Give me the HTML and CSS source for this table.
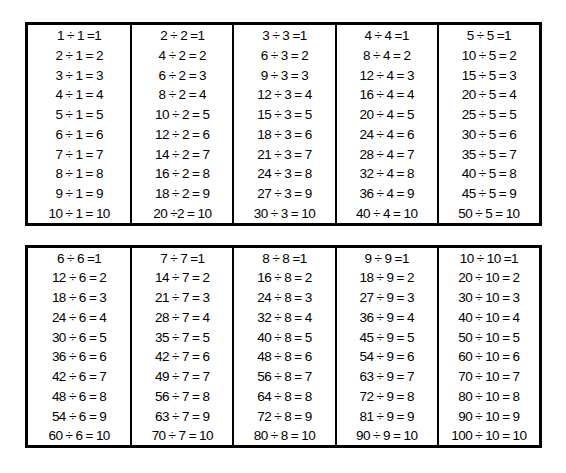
FILE: index.html
```html
<!DOCTYPE html>
<html>
<head>
<meta charset="utf-8">
<link rel="stylesheet" href="styles.css">
</head>
<body>
<div class="page">
  <div class="sheet">
    <div class="col">
      <div class="cell">1 ÷ 1 =1</div><div class="cell">2 ÷ 1 = 2</div><div class="cell">3 ÷ 1 = 3</div><div class="cell">4 ÷ 1 = 4</div><div class="cell">5 ÷ 1 = 5</div><div class="cell">6 ÷ 1 = 6</div><div class="cell">7 ÷ 1 = 7</div><div class="cell">8 ÷ 1 = 8</div><div class="cell">9 ÷ 1 = 9</div><div class="cell">10 ÷ 1 = 10</div>
    </div>
    <div class="col">
      <div class="cell">2 ÷ 2 =1</div><div class="cell">4 ÷ 2 = 2</div><div class="cell">6 ÷ 2 = 3</div><div class="cell">8 ÷ 2 = 4</div><div class="cell">10 ÷ 2 = 5</div><div class="cell">12 ÷ 2 = 6</div><div class="cell">14 ÷ 2 = 7</div><div class="cell">16 ÷ 2 = 8</div><div class="cell">18 ÷ 2 = 9</div><div class="cell">20 ÷2 = 10</div>
    </div>
    <div class="col">
      <div class="cell">3 ÷ 3 =1</div><div class="cell">6 ÷ 3 = 2</div><div class="cell">9 ÷ 3 = 3</div><div class="cell">12 ÷ 3 = 4</div><div class="cell">15 ÷ 3 = 5</div><div class="cell">18 ÷ 3 = 6</div><div class="cell">21 ÷ 3 = 7</div><div class="cell">24 ÷ 3 = 8</div><div class="cell">27 ÷ 3 = 9</div><div class="cell">30 ÷ 3 = 10</div>
    </div>
    <div class="col">
      <div class="cell">4 ÷ 4 =1</div><div class="cell">8 ÷ 4 = 2</div><div class="cell">12 ÷ 4 = 3</div><div class="cell">16 ÷ 4 = 4</div><div class="cell">20 ÷ 4 = 5</div><div class="cell">24 ÷ 4 = 6</div><div class="cell">28 ÷ 4 = 7</div><div class="cell">32 ÷ 4 = 8</div><div class="cell">36 ÷ 4 = 9</div><div class="cell">40 ÷ 4 = 10</div>
    </div>
    <div class="col">
      <div class="cell">5 ÷ 5 =1</div><div class="cell">10 ÷ 5 = 2</div><div class="cell">15 ÷ 5 = 3</div><div class="cell">20 ÷ 5 = 4</div><div class="cell">25 ÷ 5 = 5</div><div class="cell">30 ÷ 5 = 6</div><div class="cell">35 ÷ 5 = 7</div><div class="cell">40 ÷ 5 = 8</div><div class="cell">45 ÷ 5 = 9</div><div class="cell">50 ÷ 5 = 10</div>
    </div>
  </div>
  <div class="sheet">
    <div class="col">
      <div class="cell">6 ÷ 6 =1</div><div class="cell">12 ÷ 6 = 2</div><div class="cell">18 ÷ 6 = 3</div><div class="cell">24 ÷ 6 = 4</div><div class="cell">30 ÷ 6 = 5</div><div class="cell">36 ÷ 6 = 6</div><div class="cell">42 ÷ 6 = 7</div><div class="cell">48 ÷ 6 = 8</div><div class="cell">54 ÷ 6 = 9</div><div class="cell">60 ÷ 6 = 10</div>
    </div>
    <div class="col">
      <div class="cell">7 ÷ 7 =1</div><div class="cell">14 ÷ 7 = 2</div><div class="cell">21 ÷ 7 = 3</div><div class="cell">28 ÷ 7 = 4</div><div class="cell">35 ÷ 7 = 5</div><div class="cell">42 ÷ 7 = 6</div><div class="cell">49 ÷ 7 = 7</div><div class="cell">56 ÷ 7 = 8</div><div class="cell">63 ÷ 7 = 9</div><div class="cell">70 ÷ 7 = 10</div>
    </div>
    <div class="col">
      <div class="cell">8 ÷ 8 =1</div><div class="cell">16 ÷ 8 = 2</div><div class="cell">24 ÷ 8 = 3</div><div class="cell">32 ÷ 8 = 4</div><div class="cell">40 ÷ 8 = 5</div><div class="cell">48 ÷ 8 = 6</div><div class="cell">56 ÷ 8 = 7</div><div class="cell">64 ÷ 8 = 8</div><div class="cell">72 ÷ 8 = 9</div><div class="cell">80 ÷ 8 = 10</div>
    </div>
    <div class="col">
      <div class="cell">9 ÷ 9 =1</div><div class="cell">18 ÷ 9 = 2</div><div class="cell">27 ÷ 9 = 3</div><div class="cell">36 ÷ 9 = 4</div><div class="cell">45 ÷ 9 = 5</div><div class="cell">54 ÷ 9 = 6</div><div class="cell">63 ÷ 9 = 7</div><div class="cell">72 ÷ 9 = 8</div><div class="cell">81 ÷ 9 = 9</div><div class="cell">90 ÷ 9 = 10</div>
    </div>
    <div class="col">
      <div class="cell">10 ÷ 10 =1</div><div class="cell">20 ÷ 10 = 2</div><div class="cell">30 ÷ 10 = 3</div><div class="cell">40 ÷ 10 = 4</div><div class="cell">50 ÷ 10 = 5</div><div class="cell">60 ÷ 10 = 6</div><div class="cell">70 ÷ 10 = 7</div><div class="cell">80 ÷ 10 = 8</div><div class="cell">90 ÷ 10 = 9</div><div class="cell">100 ÷ 10 = 10</div>
    </div>
  </div>
</div>
</body>
</html>
```

FILE: styles.css
```css
html, body {
  margin: 0;
  padding: 0;
  background: #ffffff;
}

.page {
  padding: 22px 0 0 25px;
  display: flex;
  flex-direction: column;
  gap: 19px;
  width: 517px;
}

.sheet {
  border: 3px solid #000;
  display: grid;
  grid-template-columns: repeat(5, 1fr);
  box-sizing: border-box;
  width: 517px;
}

.col {
  display: flex;
  flex-direction: column;
}

.col + .col {
  border-left: 2px solid #000;
}

.cell {
  height: 19.75px;
  line-height: 21px;
  text-align: center;
  font-family: "Liberation Sans", Arial, sans-serif;
  font-size: 13.5px;
  letter-spacing: -0.6px;
  color: #000;
  white-space: nowrap;
}
```
